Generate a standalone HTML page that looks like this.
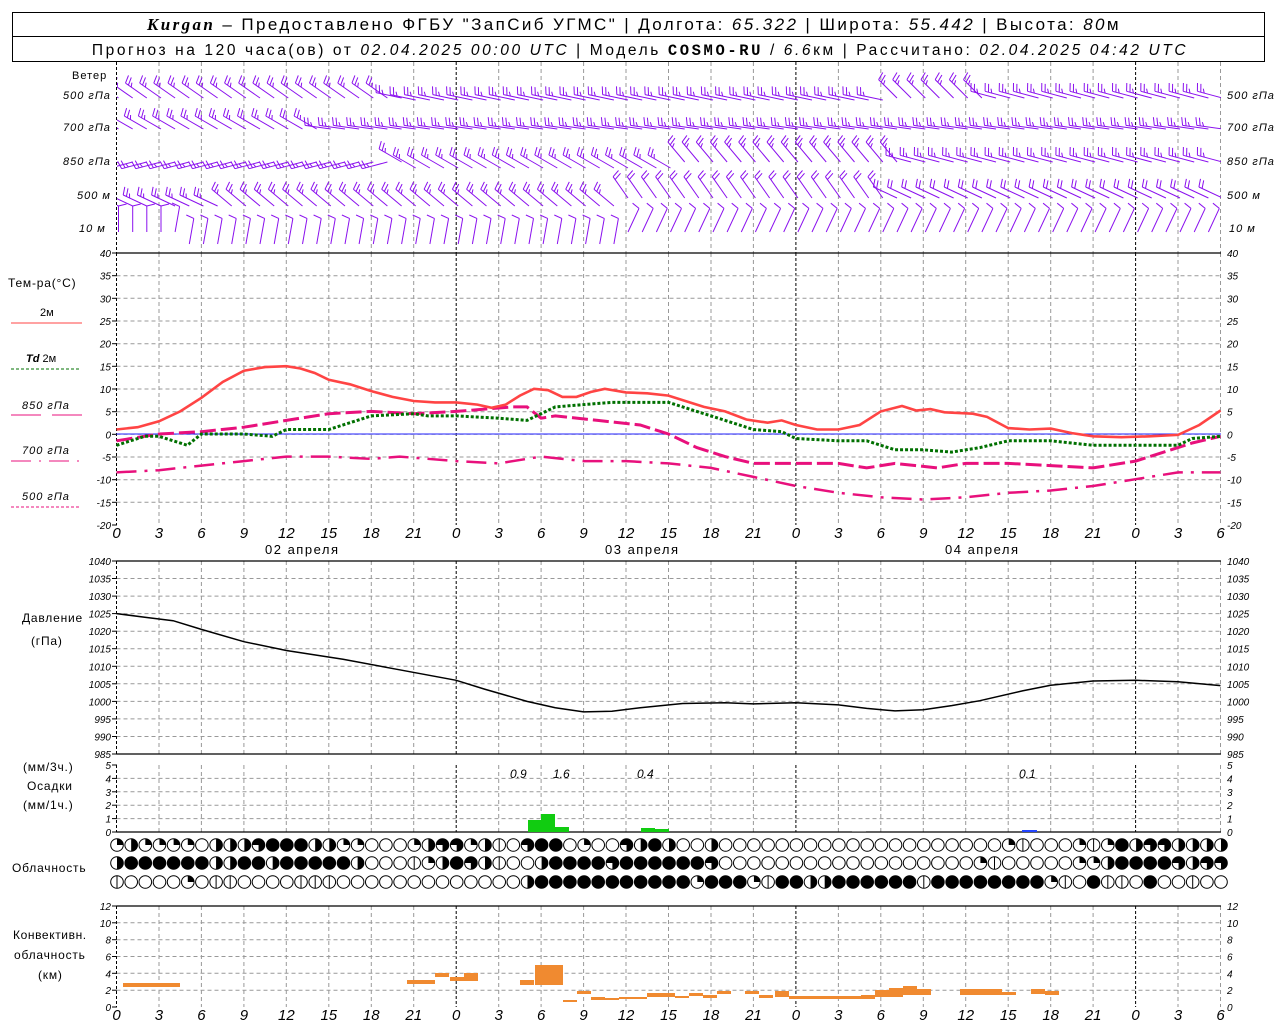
<!DOCTYPE html>
<html><head><meta charset="utf-8"><style>
body{margin:0;background:#fff;width:1280px;height:1024px;overflow:hidden}
svg{display:block}
text{font-family:"Liberation Sans",sans-serif;fill:#000}
.i{font-style:italic}
</style></head><body>
<svg id="s" width="1280" height="1024" xmlns="http://www.w3.org/2000/svg">
<defs><clipPath id="cp"><rect x="117" y="62" width="1104" height="190"/></clipPath></defs>
<rect x="12.5" y="12.5" width="1252" height="49" fill="none" stroke="#000"/>
<line x1="12" y1="36.5" x2="1264" y2="36.5" stroke="#000"/>
<text x="634" y="30" font-size="17" text-anchor="middle" letter-spacing="2.4"><tspan font-family="Liberation Serif" font-style="italic" font-weight="bold">Kurgan</tspan> – Предоставлено ФГБУ "ЗапСиб УГМС" | Долгота: <tspan class="i">65.322</tspan> | Широта: <tspan class="i">55.442</tspan> | Высота: <tspan class="i">80</tspan>м</text>
<text x="640" y="55" font-size="15.5" text-anchor="middle" letter-spacing="2.6">Прогноз на 120 часа(ов) от <tspan class="i">02.04.2025 00:00 UTC</tspan>  | Модель <tspan font-weight="bold" font-family="Liberation Mono">COSMO-RU</tspan> / <tspan class="i">6.6</tspan>км | Рассчитано: <tspan class="i">02.04.2025 04:42 UTC</tspan></text>
<g font-size="11">
<text x="72" y="79" letter-spacing="1">Ветер</text>
<text x="63" y="99" class="i" letter-spacing="1">500 гПа</text>
<text x="63" y="131" class="i" letter-spacing="1">700 гПа</text>
<text x="63" y="165" class="i" letter-spacing="1">850 гПа</text>
<text x="77" y="199" class="i" letter-spacing="1">500 м</text>
<text x="79" y="232" class="i" letter-spacing="1">10   м</text>
<text x="1227" y="99" class="i" letter-spacing="1">500 гПа</text>
<text x="1227" y="131" class="i" letter-spacing="1">700 гПа</text>
<text x="1227" y="165" class="i" letter-spacing="1">850 гПа</text>
<text x="1227" y="199" class="i" letter-spacing="1">500 м</text>
<text x="1229" y="232" class="i" letter-spacing="1">10   м</text>
<text x="8" y="287" font-size="12" letter-spacing="0.8">Тем-ра(°C)</text>
<text x="40" y="316">2м</text>
<text x="26" y="362"><tspan class="i" font-weight="bold">Td</tspan>  2м</text>
<text x="22" y="409" class="i" letter-spacing="1">850 гПа</text>
<text x="22" y="454" class="i" letter-spacing="1">700 гПа</text>
<text x="22" y="500" class="i" letter-spacing="1">500 гПа</text>
<text x="22" y="622" font-size="12" letter-spacing="0.8">Давление</text>
<text x="31" y="645" font-size="12" letter-spacing="0.8">(гПа)</text>
<text x="23" y="771" font-size="12" letter-spacing="0.8">(мм/3ч.)</text>
<text x="27" y="790" font-size="12" letter-spacing="0.8">Осадки</text>
<text x="23" y="809" font-size="12" letter-spacing="0.8">(мм/1ч.)</text>
<text x="12" y="872" font-size="12" letter-spacing="0.8">Облачность</text>
<text x="13" y="939" font-size="12" letter-spacing="0.6">Конвективн.</text>
<text x="14" y="959" font-size="12" letter-spacing="0.8">облачность</text>
<text x="38" y="979" font-size="12" letter-spacing="0.8">(км)</text>
</g>
<line x1="11" y1="323" x2="82" y2="323" stroke="#f44"/>
<line x1="11" y1="369" x2="79" y2="369" stroke="#007000" stroke-dasharray="3,2"/>
<line x1="11" y1="415" x2="41" y2="415" stroke="#e8107c"/><line x1="52" y1="415" x2="82" y2="415" stroke="#e8107c"/>
<line x1="11" y1="461" x2="82" y2="461" stroke="#e8107c" stroke-dasharray="20,8,2,8"/>
<line x1="11" y1="507" x2="79" y2="507" stroke="#e8107c" stroke-dasharray="3,2"/>
<g id="g"></g>
<g id="w" clip-path="url(#cp)"></g>
</svg>
<script>
var g=document.getElementById('g'),h='';
var X0=116.5,DX=14.154;
function X(t){return X0+t*DX}
function L(x1,y1,x2,y2,st){h+='<line x1="'+x1+'" y1="'+y1+'" x2="'+x2+'" y2="'+y2+'" '+st+'/>';}
function T(x,y,s,st){h+='<text x="'+x+'" y="'+y+'" '+(st||'')+'>'+s+'</text>';}
var gray='stroke="#999" stroke-dasharray="4,3"',blk='stroke="#000" stroke-dasharray="3,2"';
var panels=[[62,253],[253,525],[561,754],[765,832],[906,1007]];
panels.forEach(function(p){
 for(var t=0;t<=78;t+=3){var x=X(t);var st=(t%24==0)?blk:gray;L(x.toFixed(1),p[0],x.toFixed(1),p[1],st);}
});
function hgrid(y0,y1,v0,v1,step){
 for(var v=v0;v<=v1+1e-9;v+=step){var y=y1-(v-v0)/(v1-v0)*(y1-y0);
  if(v!=v0&&v!=v1)L(X0,y.toFixed(1),1221,y.toFixed(1),gray);
  L(112,y.toFixed(1),117,y.toFixed(1),'stroke="#000"');
  T(111,(y+4).toFixed(1),v,'font-size="10" text-anchor="end" class="i"');
  T(1227,(y+4).toFixed(1),v,'font-size="10" class="i"');}
}
hgrid(253,525,-20,40,5);hgrid(561,754,985,1040,5);hgrid(765,832,0,5,1);hgrid(906,1007,0,12,2);
[253,561,754,832,906].forEach(function(y){L(X0,y,1221,y,'stroke="#000" stroke-width="1.3"');});
for(var t=0;t<=78;t+=3){var lab=t%24;T(X(t),538,lab,'font-size="15" text-anchor="middle" class="i"');T(X(t),1020,lab,'font-size="15" text-anchor="middle" class="i"');}
T(265,554,'02 апреля','font-size="13" letter-spacing="1.5"');T(605,554,'03 апреля','font-size="13" letter-spacing="1.5"');T(945,554,'04 апреля','font-size="13" letter-spacing="1.5"');
function poly(pts,vf,st){var s=pts.map(function(p){return X(p[0]).toFixed(1)+','+vf(p[1]).toFixed(1)}).join(' ');h+='<polyline fill="none" points="'+s+'" '+st+'/>';}
var ty=function(v){return 434-v*4.52};
L(X0,434,1221,434,'stroke="#22f" stroke-width="1"');
poly([[0,-8.5],[3,-8],[6,-7],[9,-6],[12,-5],[15,-5],[18,-5.5],[20,-5],[24,-6],[27,-6.5],[30,-5],[33,-6],[36,-6],[39,-6.5],[42,-7.5],[45,-9.5],[48,-11.5],[51,-13],[54,-14],[57,-14.5],[60,-14],[63,-13],[66,-12.5],[69,-11.5],[72,-10],[75,-8.5],[78,-8.5]],ty,'stroke="#e8107c" stroke-width="2.5" stroke-dasharray="20,8,3,8"');
poly([[0,-1.5],[3,0],[6,0.5],[9,1.5],[12,3],[15,4.5],[18,5],[21,4.5],[24,5],[28,6],[29,6],[30,3.5],[31,4],[34,3],[37,2],[39,0],[41,-3],[43,-5],[45,-6.5],[48,-6.5],[51,-6.5],[53,-7.5],[55,-6.5],[58,-7.5],[60,-6.5],[63,-6.5],[66,-7],[69,-7.5],[72,-6],[74,-4],[76,-2],[78,-0.5]],ty,'stroke="#e8107c" stroke-width="3" stroke-dasharray="16,5"');
poly([[0,-2.5],[2,-0.5],[3,-0.5],[5,-2.5],[6,0],[9,0],[11,-0.5],[12,1],[15,1],[18,4],[21,4.5],[22,4],[24,4],[27,3.5],[29,3],[31,6],[33,6.5],[35,7],[39,7],[41,5],[43,3],[45,1],[47,0.5],[48,-1],[51,-1.5],[53,-1.5],[55,-3.5],[57,-3.5],[59,-4],[61,-3],[63,-1.5],[66,-1.5],[69,-2.5],[72,-2.5],[75,-2.5],[76,-1],[78,-0.5]],ty,'stroke="#007000" stroke-width="3" stroke-dasharray="3,2"');
poly([[0,1],[1.5,1.5],[3,2.8],[4.5,5],[6,8],[7.5,11.5],[9,14],[10.5,14.8],[12,15],[13,14.5],[14,13.5],[15,12],[16.5,11],[18,9.5],[19.5,8.2],[21,7.3],[22.5,7],[24,7],[25.5,6.5],[26.5,5.8],[27.5,6.5],[28.5,8.5],[29.5,10],[30.5,9.7],[31.5,8.2],[32.5,8.2],[33.5,9.3],[34.5,10],[36,9.2],[37.5,9],[39,8.5],[40.5,7],[41.5,6],[43,5],[44.5,3.2],[46,2.5],[47,3],[48,2],[49.5,1],[51,1],[52.5,2],[54,5],[55.5,6.2],[56.5,5.2],[57.5,5.5],[58.5,4.8],[60.5,4.5],[61.5,3.8],[63,1.3],[64.5,1],[66,1.2],[67.5,0.2],[69,-0.5],[71,-0.7],[73,-0.5],[75,-0.2],[76.5,2],[78,5.2]],ty,'stroke="#f44" stroke-width="2.6"');
var py=function(v){return 561+(1040-v)*3.51};
poly([[0,1025],[2,1024],[4,1023],[6,1020.5],[9,1017],[12,1014.5],[16,1012],[20,1009],[24,1006],[26,1003.5],[29,1000],[31,998.2],[33,997],[35,997.2],[37,998.2],[40,999.4],[43,999.6],[45,999.3],[48,999.6],[51,999],[53,998],[55,997.3],[57,997.6],[59,998.8],[61,1000.2],[64,1003],[66,1004.6],[69,1005.8],[72,1006],[75,1005.6],[78,1004.5]],py,'stroke="#000" stroke-width="1.5"');
function R(x,y,w,hh,c){h+='<rect x="'+x+'" y="'+y+'" width="'+w+'" height="'+hh+'" fill="'+c+'"/>';}
R(528,820,13,12,'#11cc11');R(541,814,14,18,'#11cc11');R(555,827,14,5,'#11cc11');R(641,828,14,4,'#11cc11');R(655,829,14,3,'#11cc11');R(1022,830,15,2,'#2244ff');R(852,831,14,1,'#888');
T(510,778,'0.9','font-size="12" class="i"');T(553,778,'1.6','font-size="12" class="i"');T(637,778,'0.4','font-size="12" class="i"');T(1019,778,'0.1','font-size="12" class="i"');
[[123,983,57,4],[407,980,28,4],[435,973,14,4],[450,977,14,4],[464,973,14,8],[520,980,14,5],[535,965,14,20],[549,965,14,20],[563,1000,14,2],[577,991,14,3],[591,997,14,3],[605,998,14,2],[619,997,28,2],[647,993,28,4],[675,996,14,2],[689,993,14,3],[703,995,14,3],[717,991,14,3],[745,991,14,3],[759,995,14,3],[775,991,14,6],[789,996,72,3],[861,995,14,4],[875,990,14,7],[889,988,14,9],[903,986,14,9],[917,989,14,6],[960,989,42,6],[1002,992,14,3],[1031,989,14,5],[1045,991,14,4]].forEach(function(r){R(r[0],r[1],r[2],r[3],'#f08a30');});
var rows=[
[2,4,2,2,2,2,0,4,4,4,6,8,8,8,4,4,2,2,0,0,0,2,4,6,6,2,4,1,0,6,8,8,0,2,0,0,6,4,8,4,0,0,4,0,0,0,0,0,0,0,0,0,0,0,0,0,0,0,0,0,0,0,0,2,1,0,0,0,2,1,2,8,4,6,6,4,4,4,4],
[4,8,8,8,8,8,8,4,4,8,8,4,8,8,8,8,8,4,0,0,0,1,2,4,8,6,4,1,0,0,4,8,8,8,8,6,8,8,8,8,8,8,6,0,0,0,0,0,0,0,0,0,0,0,0,0,0,0,0,0,0,2,1,0,0,0,0,0,2,2,4,8,8,8,8,6,4,6,6],
[1,0,0,0,0,2,0,1,1,0,0,0,0,1,1,1,0,0,0,0,0,0,0,0,0,0,0,0,0,4,8,8,8,8,8,8,8,8,8,8,8,2,8,8,8,2,1,8,8,4,4,8,8,8,8,8,8,1,8,8,8,8,8,8,8,8,2,1,0,8,1,1,0,8,0,0,1,0,0]];
var cy=[845,863,882],r=6.3;
rows.forEach(function(row,k){for(var i=0;i<79;i++){var x=X(i)+0.5,y=cy[k],v=row[i];
 h+='<circle cx="'+x.toFixed(1)+'" cy="'+y+'" r="'+r+'" fill="'+(v==8?'#000':'#fff')+'" stroke="#000" stroke-width="1"/>';
 if(v==1)L(x.toFixed(1),y-r,x.toFixed(1),y+r,'stroke="#000"');
 if(v==2)h+='<path d="M'+x+' '+y+'V'+(y-r)+'A'+r+' '+r+' 0 0 1 '+(x+r)+' '+y+'Z" fill="#000"/>';
 if(v==4)h+='<path d="M'+x+' '+(y-r)+'A'+r+' '+r+' 0 0 1 '+x+' '+(y+r)+'Z" fill="#000"/>';
 if(v==6)h+='<path d="M'+x+' '+y+'H'+(x-r)+'A'+r+' '+r+' 0 1 1 '+x+' '+(y+r)+'Z" fill="#000"/>';
}});
g.innerHTML=h;
h='';
var wc='stroke="#8a10ee" stroke-width="1"';
function barb(x,y,a,n){var rad=a*Math.PI/180,dx=-Math.cos(rad),dy=-Math.sin(rad),Ls=26;
 var tx=x+Ls*dx,ty2=y+Ls*dy;L(x.toFixed(1),y.toFixed(1),tx.toFixed(1),ty2.toFixed(1),wc);
 var px=-dy,py2=dx;if(py2>0){px=-px;py2=-py2;}
 for(var i=0;i<n;i++){var bx=tx-i*3.5*dx,by=ty2-i*3.5*dy;var len=(i==n-1&&n>1&&n%2)?4:8;
  L(bx.toFixed(1),by.toFixed(1),(bx+len*px+2*dx).toFixed(1),(by+len*py2+2*dy).toFixed(1),wc);}}
for(var t=0;t<=78;t++){var x=X(t)+2;
 barb(x,98+(t>20&&t<55?2:0),t<20?35:t<55?12:t<62?45:15,t<20?3:3);
 barb(x,129,t<15?30:8,3);
 barb(x,162+(t>20&&t<40?6:0),t<20?-15:t<40?30:t<56?50:15,3);
 barb(x,198+(t<36?8:0),t<8?25:t<36?40:t<55?55:25,t<36?3:2);
 barb(x,232+(t>4&&t<36?12:0),t<4?90:t<36?100:115,1);
}
document.getElementById('w').innerHTML=h;
</script>
</body></html>
